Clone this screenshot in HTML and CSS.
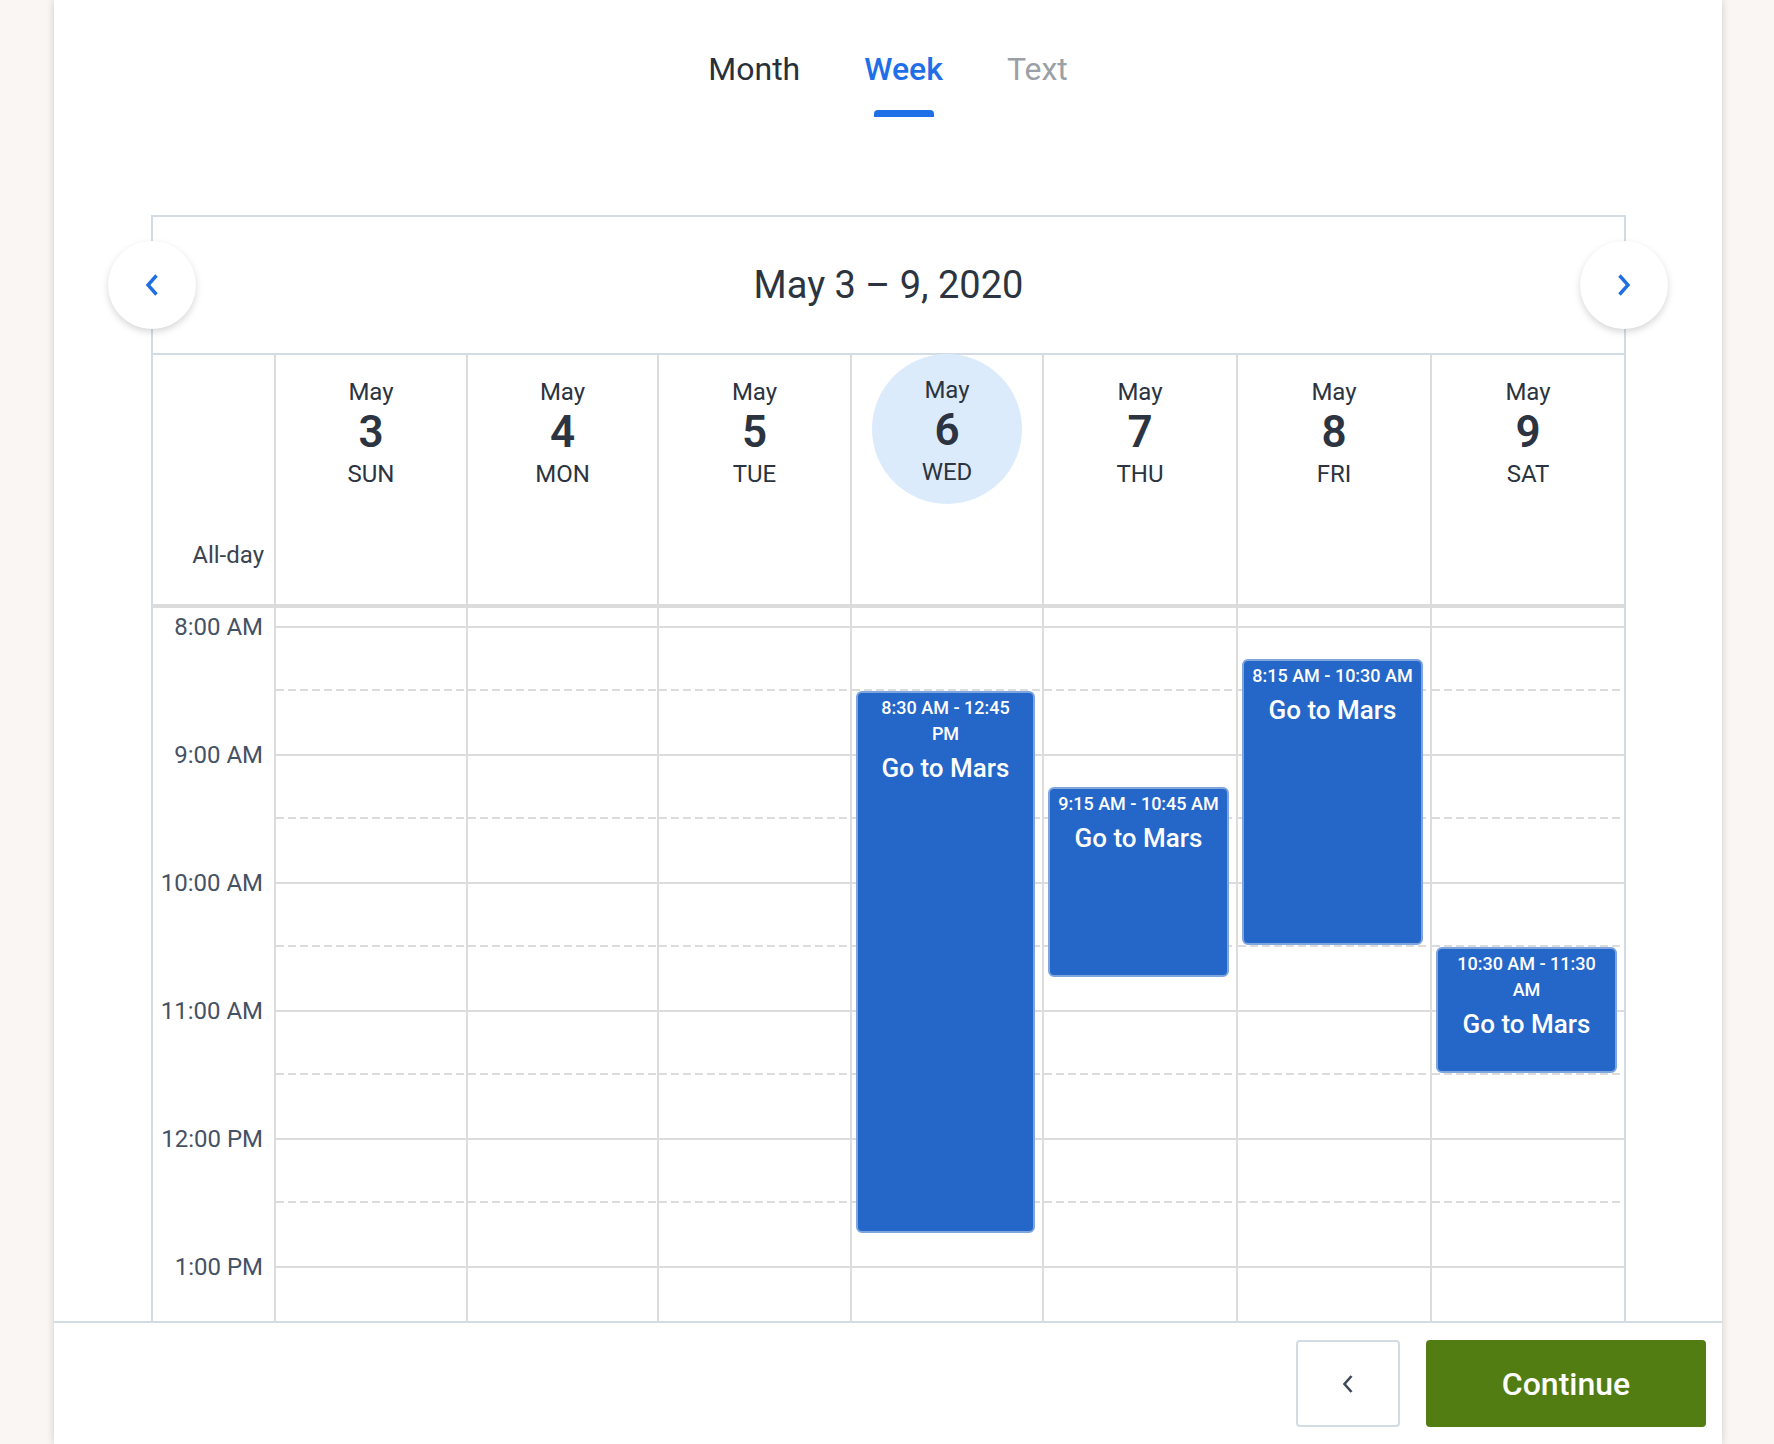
FILE: index.html
```html
<!DOCTYPE html>
<html lang="en">
<head>
<meta charset="utf-8">
<title>Week view</title>
<link rel="stylesheet" href="styles.css">
</head>
<body>
<div class="card">
  <div class="main">
    <nav class="tabs">
      <div class="tab">Month</div>
      <div class="tab active">Week</div>
      <div class="tab muted">Text</div>
    </nav>

    <section class="cal">
      <div class="cal-title">
        <button class="nav prev" aria-label="Previous week">
          <svg width="16" height="24" viewBox="0 0 16 24"><path d="M12.5 2.5 L4 12 L12.5 21.5" fill="none" stroke="#1f6fe3" stroke-width="3.4"/></svg>
        </button>
        <h2 class="range">May 3 – 9, 2020</h2>
        <button class="nav next" aria-label="Next week">
          <svg width="16" height="24" viewBox="0 0 16 24"><path d="M3.5 2.5 L12 12 L3.5 21.5" fill="none" stroke="#1f6fe3" stroke-width="3.4"/></svg>
        </button>
      </div>

      <div class="grid head">
        <div class="allday">All-day</div>
        <div class="day"><span class="mon">May</span><span class="num">3</span><span class="dow">SUN</span></div>
        <div class="day"><span class="mon">May</span><span class="num">4</span><span class="dow">MON</span></div>
        <div class="day"><span class="mon">May</span><span class="num">5</span><span class="dow">TUE</span></div>
        <div class="day today"><span class="mon">May</span><span class="num">6</span><span class="dow">WED</span></div>
        <div class="day"><span class="mon">May</span><span class="num">7</span><span class="dow">THU</span></div>
        <div class="day"><span class="mon">May</span><span class="num">8</span><span class="dow">FRI</span></div>
        <div class="day"><span class="mon">May</span><span class="num">9</span><span class="dow">SAT</span></div>
      </div>

      <div class="grid body">
        <div class="times">
          <div class="time">8:00 AM</div>
          <div class="time">9:00 AM</div>
          <div class="time">10:00 AM</div>
          <div class="time">11:00 AM</div>
          <div class="time">12:00 PM</div>
          <div class="time">1:00 PM</div>
        </div>
        <div class="col">
          <div class="slot"><div class="half"></div></div><div class="slot"><div class="half"></div></div><div class="slot"><div class="half"></div></div><div class="slot"><div class="half"></div></div><div class="slot"><div class="half"></div></div><div class="slot"><div class="half"></div></div>
        </div>
        <div class="col">
          <div class="slot"><div class="half"></div></div><div class="slot"><div class="half"></div></div><div class="slot"><div class="half"></div></div><div class="slot"><div class="half"></div></div><div class="slot"><div class="half"></div></div><div class="slot"><div class="half"></div></div>
        </div>
        <div class="col">
          <div class="slot"><div class="half"></div></div><div class="slot"><div class="half"></div></div><div class="slot"><div class="half"></div></div><div class="slot"><div class="half"></div></div><div class="slot"><div class="half"></div></div><div class="slot"><div class="half"></div></div>
        </div>
        <div class="col">
          <div class="slot"><div class="half"></div></div><div class="slot"><div class="half"></div></div><div class="slot"><div class="half"></div></div><div class="slot"><div class="half"></div></div><div class="slot"><div class="half"></div></div><div class="slot"><div class="half"></div></div>
          <div class="event" style="top:83px;height:542px">
            <div class="ev-time">8:30 AM - 12:45<br>PM</div>
            <div class="ev-title">Go to Mars</div>
          </div>
        </div>
        <div class="col">
          <div class="slot"><div class="half"></div></div><div class="slot"><div class="half"></div></div><div class="slot"><div class="half"></div></div><div class="slot"><div class="half"></div></div><div class="slot"><div class="half"></div></div><div class="slot"><div class="half"></div></div>
          <div class="event" style="top:179px;height:190px">
            <div class="ev-time">9:15 AM - 10:45 AM</div>
            <div class="ev-title">Go to Mars</div>
          </div>
        </div>
        <div class="col">
          <div class="slot"><div class="half"></div></div><div class="slot"><div class="half"></div></div><div class="slot"><div class="half"></div></div><div class="slot"><div class="half"></div></div><div class="slot"><div class="half"></div></div><div class="slot"><div class="half"></div></div>
          <div class="event" style="top:51px;height:286px">
            <div class="ev-time">8:15 AM - 10:30 AM</div>
            <div class="ev-title">Go to Mars</div>
          </div>
        </div>
        <div class="col">
          <div class="slot"><div class="half"></div></div><div class="slot"><div class="half"></div></div><div class="slot"><div class="half"></div></div><div class="slot"><div class="half"></div></div><div class="slot"><div class="half"></div></div><div class="slot"><div class="half"></div></div>
          <div class="event" style="top:339px;height:126px">
            <div class="ev-time">10:30 AM - 11:30<br>AM</div>
            <div class="ev-title">Go to Mars</div>
          </div>
        </div>
      </div>
    </section>
  </div>

  <footer class="footer">
    <button class="back" aria-label="Back">
      <svg width="14" height="20" viewBox="0 0 14 20"><path d="M10.5 2 L3.5 10 L10.5 18" fill="none" stroke="#3e4a5a" stroke-width="2.6"/></svg>
    </button>
    <button class="continue">Continue</button>
  </footer>
</div>
</body>
</html>
```

FILE: styles.css
```css
html, body {
  margin: 0;
  padding: 0;
}

body {
  background: #f9f6f3;
  font-family: Roboto, "Open Sans", "Liberation Sans", sans-serif;
  color: #2b3440;
}

.card {
  margin-left: 54px;
  width: 1668px;
  height: 1444px;
  background: #fff;
  box-shadow: 0 0 8px rgba(0, 0, 0, 0.18);
  display: flex;
  flex-direction: column;
}

.main {
  flex: 1;
  min-height: 0;
  overflow: hidden;
}

/* Tabs */
.tabs {
  display: flex;
  justify-content: center;
  gap: 64px;
  padding-top: 49px;
}

.tab {
  display: flex;
  flex-direction: column;
  align-items: center;
  font-size: 32px;
  line-height: 40px;
  color: #27303b;
}

.tab::after {
  content: "";
  width: 60px;
  height: 7px;
  margin-top: 21px;
  border-radius: 4px 4px 0 0;
  background: transparent;
}

.tab.active {
  color: #1f70e8;
  font-weight: 500;
}

.tab.active::after {
  background: #1f70e8;
}

.tab.muted {
  color: #9ba0a6;
}

/* Calendar */
.cal {
  margin: 98px 96px 0 97px;
  border: 2px solid #d3dce5;
  border-bottom: none;
}

.cal-title {
  position: relative;
  height: 136px;
  display: flex;
  align-items: center;
  justify-content: center;
  border-bottom: 2px solid #d3dce5;
}

.range {
  margin: 0;
  font-size: 38px;
  font-weight: 400;
  color: #2b3440;
}

.nav {
  position: absolute;
  top: 24px;
  width: 88px;
  height: 88px;
  border: none;
  border-radius: 50%;
  background: #fff;
  box-shadow: 0 3px 7px rgba(0, 0, 0, 0.16);
  display: flex;
  align-items: center;
  justify-content: center;
  padding: 0;
}

.nav.prev {
  left: -45px;
}

.nav.next {
  right: -44px;
}

.grid {
  display: grid;
  grid-template-columns: 121px 192px 191px 193px 192px 194px 194px 1fr;
}

.head {
  height: 249px;
  border-bottom: 4px solid #dcdcdc;
}

.allday {
  display: flex;
  align-items: flex-end;
  justify-content: flex-end;
  padding: 0 10px 33px 0;
  font-size: 24px;
  line-height: 32px;
  color: #3a4452;
}

.day {
  position: relative;
  border-left: 2px solid #dcdcdc;
  padding-top: 21px;
  display: flex;
  flex-direction: column;
  align-items: center;
  color: #2b3440;
}

.day > span {
  position: relative;
}

.day.today {
  padding-top: 19px;
}

.day.today::before {
  content: "";
  position: absolute;
  top: -1px;
  left: 50%;
  width: 150px;
  height: 150px;
  margin-left: -75px;
  border-radius: 50%;
  background: #dcebfc;
}

.mon {
  font-size: 24px;
  line-height: 32px;
}

.num {
  font-size: 44px;
  line-height: 48px;
  font-weight: 600;
}

.dow {
  font-size: 24px;
  line-height: 32px;
  margin-top: 2px;
}

/* Body */
.times {
  padding-top: 3px;
}

.time {
  height: 128px;
  font-size: 24px;
  line-height: 32px;
  text-align: right;
  padding-right: 11px;
  color: #465264;
}

.col {
  position: relative;
  border-left: 2px solid #dcdcdc;
  padding-top: 18px;
}

.slot {
  height: 128px;
  box-sizing: border-box;
  border-top: 2px solid #dcdcdc;
}

.half {
  height: 63px;
  background: repeating-linear-gradient(90deg, #dcdcdc 0 8px, transparent 8px 12px) left bottom / 100% 2px no-repeat;
}

.event {
  position: absolute;
  left: 4px;
  right: 7px;
  box-sizing: border-box;
  background: #2467c9;
  border: 2px solid #7fa5df;
  border-radius: 6px;
  color: #fff;
  text-align: center;
  padding-top: 2px;
}

.ev-time {
  font-size: 18px;
  line-height: 26px;
  font-weight: 500;
  white-space: nowrap;
}

.ev-title {
  font-size: 26px;
  line-height: 42px;
  font-weight: 500;
}

/* Footer */
.footer {
  box-sizing: border-box;
  height: 123px;
  flex: none;
  border-top: 2px solid #d3dce5;
  display: flex;
  justify-content: flex-end;
  align-items: flex-start;
  gap: 26px;
  padding: 17px 16px 0 0;
}

.back {
  width: 104px;
  height: 87px;
  box-sizing: border-box;
  border: 2px solid #d3dce5;
  border-radius: 4px;
  background: #fff;
  display: flex;
  align-items: center;
  justify-content: center;
  padding: 0;
}

.continue {
  width: 280px;
  height: 87px;
  border: none;
  border-radius: 4px;
  background: #517d13;
  color: #fff;
  font-family: Roboto, "Open Sans", "Liberation Sans", sans-serif;
  font-size: 32px;
  font-weight: 500;
}
```
